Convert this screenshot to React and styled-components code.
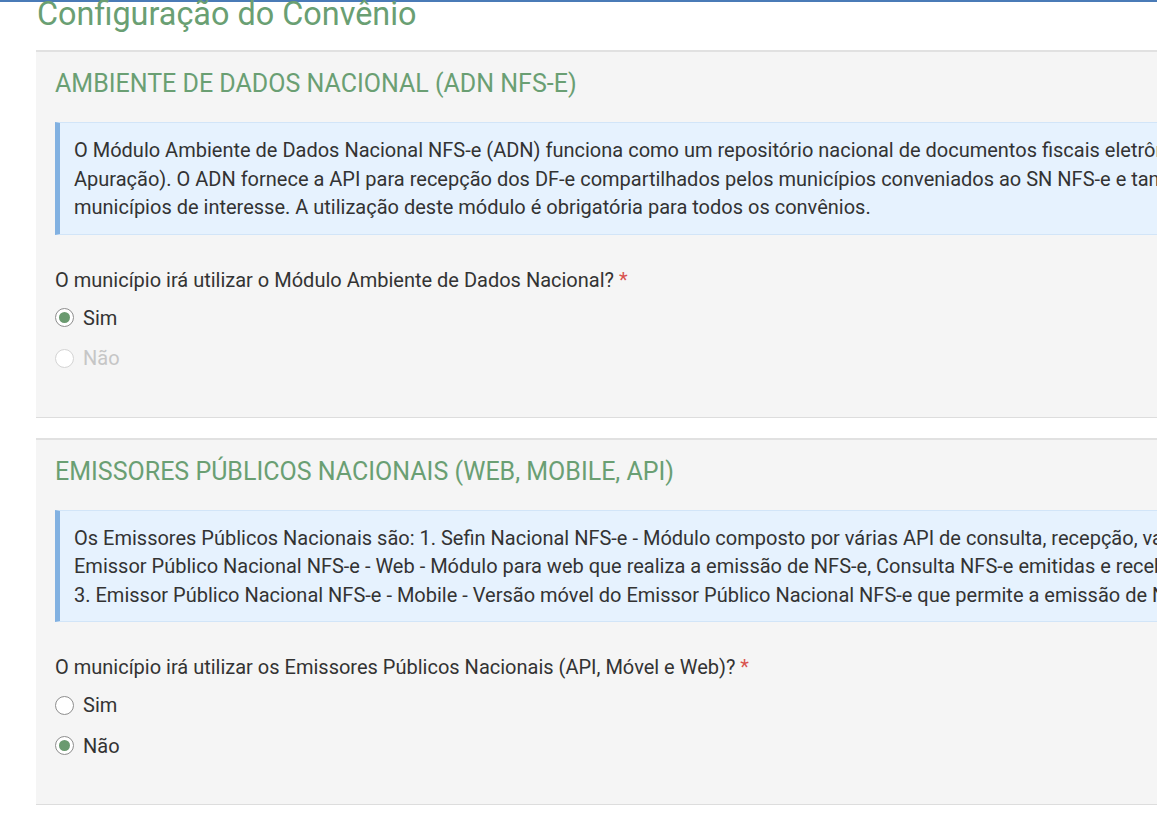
import React from 'react'
import styled, { createGlobalStyle } from 'styled-components'

const GlobalStyle = createGlobalStyle`
  html, body {
    margin: 0;
    padding: 0;
    background: #ffffff;
    overflow: hidden;
  }
  body {
    font-family: Roboto, "Liberation Sans", Arial, sans-serif;
    color: #333333;
  }
`

const TopLine = styled.div`
  height: 2px;
  background: #4a7bb7;
`

const Page = styled.div`
  width: 1600px;
  padding-left: 36px;
`

const Title = styled.h1`
  margin: -6px 0 0 1px;
  font-size: 32.4px;
  font-weight: 400;
  line-height: 36px;
  color: #6a9f73;
`

const Card = styled.section`
  margin-top: ${({ $first }) => ($first ? '18px' : '20px')};
  background: #f5f5f5;
  border-top: 2px solid #e1e1e1;
  border-bottom: 1px solid #dddddd;
  padding: 18px 19px 38px;
`

const CardTitle = styled.h2`
  margin: 0;
  font-size: 25px;
  font-weight: 400;
  line-height: 28px;
  color: #6a9f73;
`

const InfoBox = styled.div`
  margin-top: 24px;
  background: #e6f2fe;
  border: 1px solid #d2e5f8;
  border-left: 5px solid #82b1e1;
  padding: 13px 0 12px 14px;
  font-size: 20px;
  line-height: 28.5px;
  color: #333333;
  white-space: nowrap;
`

const Question = styled.p`
  margin: 31px 0 0;
  font-size: 20px;
  line-height: 28px;
  color: #333333;
`

const Required = styled.span`
  color: #d9534f;
`

const RadioList = styled.div`
  display: flex;
  flex-direction: column;
  margin-top: 4px;
`

const RadioRow = styled.label`
  display: flex;
  align-items: center;
  gap: 9px;
  height: 40.5px;
  font-size: 20px;
  color: ${({ $disabled }) => ($disabled ? '#c6c6c6' : '#333333')};
`

const Circle = styled.span`
  box-sizing: border-box;
  width: 19px;
  height: 19px;
  border-radius: 50%;
  background: #ffffff;
  border: 1px solid ${({ $disabled }) => ($disabled ? '#d4d4d4' : '#8e8e8e')};
  display: flex;
  align-items: center;
  justify-content: center;

  &::after {
    content: '';
    width: 11px;
    height: 11px;
    border-radius: 50%;
    background: ${({ $checked }) => ($checked ? '#6a9a6f' : 'transparent')};
  }
`

const Radio = ({ label, checked, disabled }) => (
  <RadioRow $disabled={disabled}>
    <Circle $checked={checked} $disabled={disabled} />
    {label}
  </RadioRow>
)

const App = () => {
  return (
    <>
      <GlobalStyle />
      <TopLine />
      <Page>
        <Title>Configuração do Convênio</Title>

        <Card $first>
          <CardTitle>AMBIENTE DE DADOS NACIONAL (ADN NFS-E)</CardTitle>
          <InfoBox>
            O Módulo Ambiente de Dados Nacional NFS-e (ADN) funciona como um repositório nacional de documentos fiscais eletrônicos (DF-e, NFS-e, Eventos e Documentos de
            <br />
            Apuração). O ADN fornece a API para recepção dos DF-e compartilhados pelos municípios conveniados ao SN NFS-e e também para a distribuição dos DF-e aos
            <br />
            municípios de interesse. A utilização deste módulo é obrigatória para todos os convênios.
          </InfoBox>
          <Question>
            O município irá utilizar o Módulo Ambiente de Dados Nacional? <Required>*</Required>
          </Question>
          <RadioList>
            <Radio label="Sim" checked />
            <Radio label="Não" disabled />
          </RadioList>
        </Card>

        <Card>
          <CardTitle>EMISSORES PÚBLICOS NACIONAIS (WEB, MOBILE, API)</CardTitle>
          <InfoBox>
            Os Emissores Públicos Nacionais são: 1. Sefin Nacional NFS-e - Módulo composto por várias API de consulta, recepção, validação e geração de NFS-e; 2.
            <br />
            Emissor Público Nacional NFS-e - Web - Módulo para web que realiza a emissão de NFS-e, Consulta NFS-e emitidas e recebidas, entre outras funcionalidades;
            <br />
            3. Emissor Público Nacional NFS-e - Mobile - Versão móvel do Emissor Público Nacional NFS-e que permite a emissão de NFS-e por dispositivos móveis.
          </InfoBox>
          <Question>
            O município irá utilizar os Emissores Públicos Nacionais (API, Móvel e Web)? <Required>*</Required>
          </Question>
          <RadioList>
            <Radio label="Sim" />
            <Radio label="Não" checked />
          </RadioList>
        </Card>
      </Page>
    </>
  )
}

export default App
